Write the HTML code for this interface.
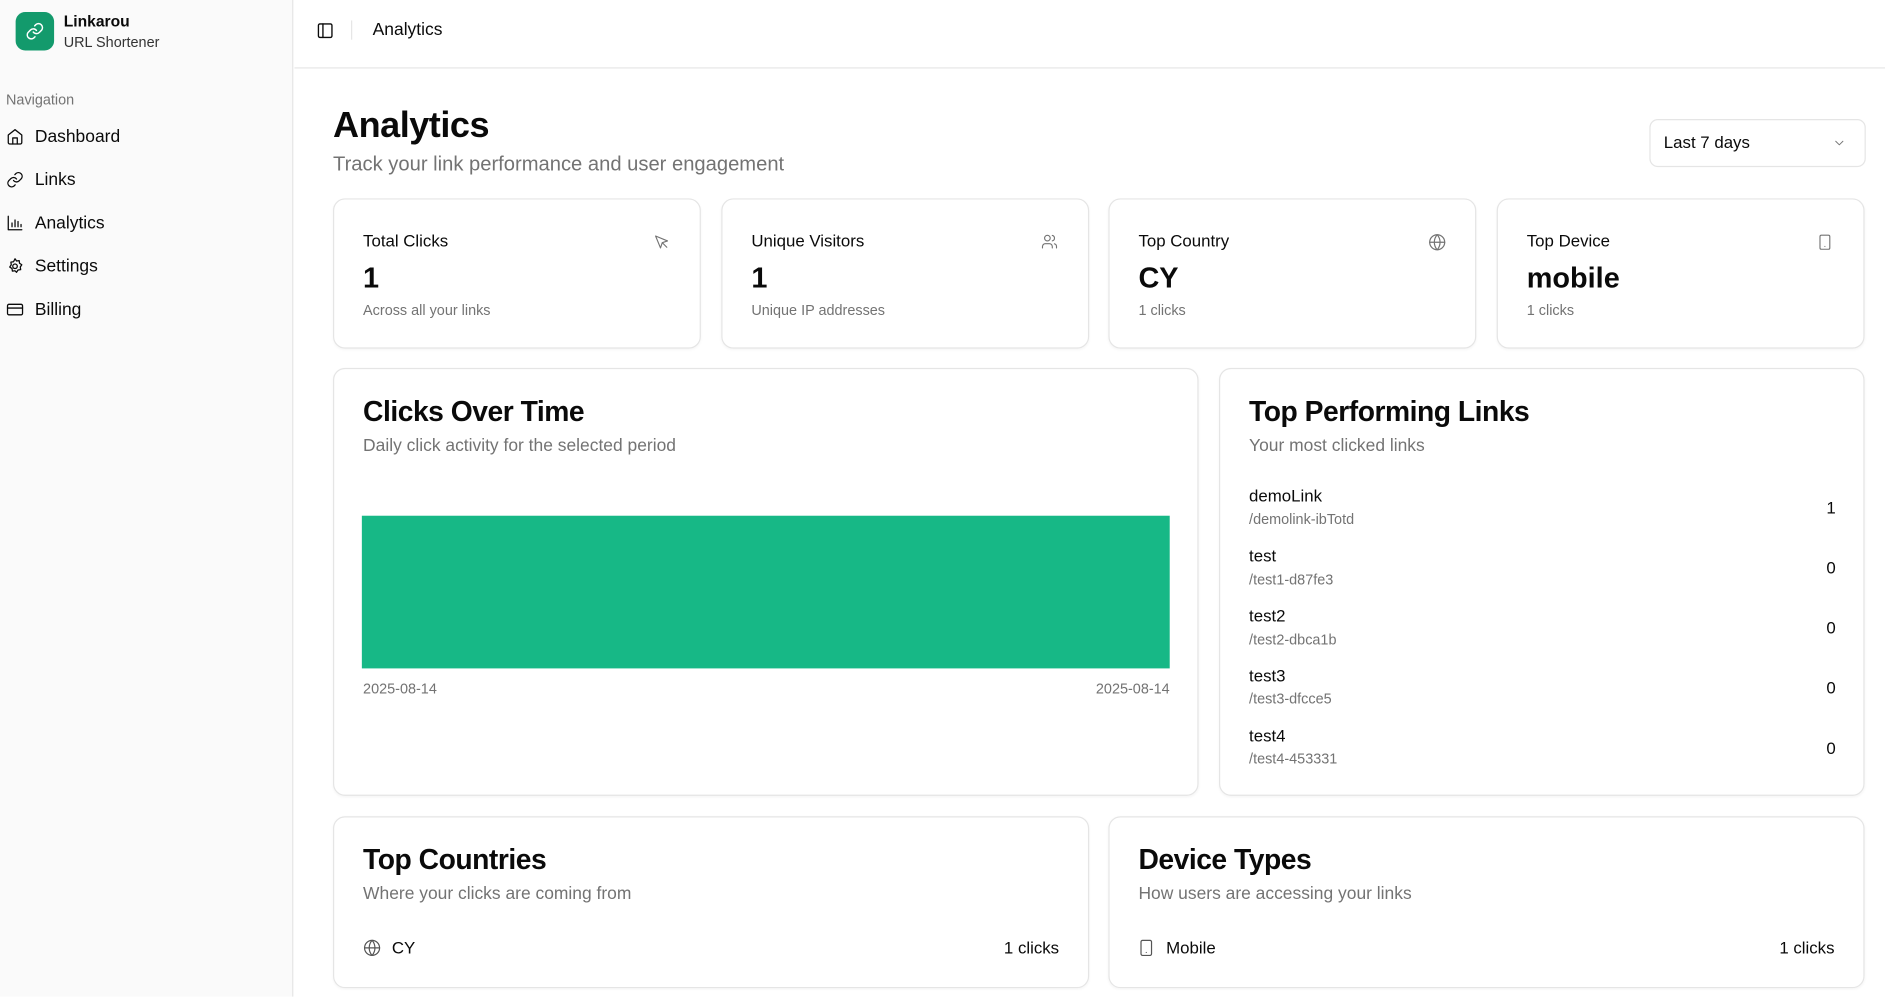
<!DOCTYPE html>
<html><head><meta charset="utf-8"><style>
*{box-sizing:border-box;margin:0;padding:0}
html,body{width:1885px;height:997px;overflow:hidden;background:#fff}
#s{position:absolute;left:0;top:0;width:1568px;height:829px;transform:scale(1.20217);transform-origin:0 0;font-family:"Liberation Sans",sans-serif;color:#0a0a0a}
.a{position:absolute;white-space:nowrap}
.card{position:absolute;border:1px solid #e5e5e5;border-radius:10px;background:#fff;box-shadow:0 1px 2px rgba(0,0,0,.04)}
.g{color:#737373}
svg{position:absolute;fill:none;stroke:currentColor;stroke-width:2;stroke-linecap:round;stroke-linejoin:round}
.st{font-size:14px;top:26px;left:24px}
.sv{font-size:24px;font-weight:bold;top:52px;left:24px}
.ss{font-size:12px;top:85px;left:24px}
.ct{font-size:23.5px;font-weight:bold;top:22px;left:24px;letter-spacing:-.4px}
.cd{font-size:14.5px;top:56px;left:24px}
.nm{font-size:14px}
.pt{font-size:12px}
</style></head><body><div id="s">
<div class="a" style="left:0;top:0;width:244px;height:829px;background:#fafafa;border-right:1px solid #e5e5e5"></div>
<div class="a" style="left:13px;top:10px;width:32px;height:32px;border-radius:8px;background:#139a6c"></div>
<svg style="left:21px;top:18px;color:#fff;stroke-width:1.8" width="16" height="16" viewBox="0 0 24 24"><path d="M10 13a5 5 0 0 0 7.5.5l3-3a5 5 0 0 0-7-7l-1.7 1.7"/><path d="M14 11a5 5 0 0 0-7.5-.5l-3 3a5 5 0 0 0 7 7l1.7-1.7"/></svg>
<div class="a" style="left:53px;top:10px;font-size:13px;font-weight:bold">Linkarou</div>
<div class="a" style="left:53px;top:28px;font-size:12px;color:#333">URL Shortener</div>
<div class="a g" style="left:5px;top:76px;font-size:12px">Navigation</div>
<svg style="left:5px;top:106px;stroke-width:1.7" width="15" height="15" viewBox="0 0 24 24"><path d="M3 10l9-7 9 7v10a2 2 0 0 1-2 2H5a2 2 0 0 1-2-2z"/><path d="M9 22v-8h6v8"/></svg>
<div class="a" style="left:29px;top:106px;font-size:14.5px">Dashboard</div>
<svg style="left:5px;top:142px;stroke-width:1.7" width="15" height="15" viewBox="0 0 24 24"><path d="M10 13a5 5 0 0 0 7.5.5l3-3a5 5 0 0 0-7-7l-1.7 1.7"/><path d="M14 11a5 5 0 0 0-7.5-.5l-3 3a5 5 0 0 0 7 7l1.7-1.7"/></svg>
<div class="a" style="left:29px;top:142px;font-size:14.5px">Links</div>
<svg style="left:5px;top:178px;stroke-width:1.7" width="15" height="15" viewBox="0 0 24 24"><path d="M3 3v18h18M8 17v-5M12 17V8M16 17v-7M20 17v-3"/></svg>
<div class="a" style="left:29px;top:178px;font-size:14.5px">Analytics</div>
<svg style="left:5px;top:214px;stroke-width:1.7" width="15" height="15" viewBox="0 0 24 24"><circle cx="12" cy="12" r="3"/><path d="M12 2l2 3 3.5-.5.5 3.5 3 2-2 3 .5 3.5-3.5.5-2 3-2-2-3.5.5-.5-3.5-3-2 2-3-.5-3.5 3.5-.5z"/></svg>
<div class="a" style="left:29px;top:214px;font-size:14.5px">Settings</div>
<svg style="left:5px;top:250px;stroke-width:1.7" width="15" height="15" viewBox="0 0 24 24"><rect x="2" y="5" width="20" height="14" rx="2"/><path d="M2 10h20"/></svg>
<div class="a" style="left:29px;top:250px;font-size:14.5px">Billing</div>
<div class="a" style="left:245px;top:56px;width:1323px;height:1px;background:#e5e5e5"></div>
<svg style="left:263px;top:18px;stroke-width:1.8" width="15" height="15" viewBox="0 0 24 24"><rect x="3" y="3" width="18" height="18" rx="2"/><path d="M9 3v18"/></svg>
<div class="a" style="left:292px;top:17px;width:1px;height:16px;background:#e5e5e5"></div>
<div class="a" style="left:310px;top:17px;font-size:14.5px">Analytics</div>
<div class="a" style="left:277px;top:88px;font-size:30px;font-weight:bold;letter-spacing:-.4px">Analytics</div>
<div class="a g" style="left:277px;top:127px;font-size:16.8px">Track your link performance and user engagement</div>
<div class="a" style="left:1372px;top:99px;width:180px;height:40px;border:1px solid #e5e5e5;border-radius:7px"></div>
<div class="a" style="left:1384px;top:110px;font-size:14px">Last 7 days</div>
<svg style="left:1524px;top:113px;color:#737373;stroke-width:1.5" width="12" height="12" viewBox="0 0 24 24"><path d="M6 9l6 6 6-6"/></svg>

<div class="card" style="left:277px;top:165px;width:306px;height:125px"><div class="a st">Total Clicks</div><div class="a sv">1</div><div class="a ss g">Across all your links</div>
<svg style="left:265px;top:28px;color:#737373;stroke-width:1.6" width="14" height="14" viewBox="0 0 24 24"><path d="M4 4l7 17 2.5-7.5L21 11z"/><path d="M14 14l6 6"/></svg></div>
<div class="card" style="left:600px;top:165px;width:306px;height:125px"><div class="a st">Unique Visitors</div><div class="a sv">1</div><div class="a ss g">Unique IP addresses</div>
<svg style="left:265px;top:28px;color:#737373;stroke-width:1.6" width="14" height="14" viewBox="0 0 24 24"><circle cx="9" cy="7" r="4"/><path d="M2 21v-2a4 4 0 0 1 4-4h6a4 4 0 0 1 4 4v2M16 3.1a4 4 0 0 1 0 7.8M22 21v-2a4 4 0 0 0-3-3.9"/></svg></div>
<div class="card" style="left:922px;top:165px;width:306px;height:125px"><div class="a st">Top Country</div><div class="a sv">CY</div><div class="a ss g">1 clicks</div>
<svg style="left:265px;top:28px;color:#737373;stroke-width:1.6" width="15" height="15" viewBox="0 0 24 24"><circle cx="12" cy="12" r="10"/><path d="M2 12h20M12 2a15 15 0 0 1 0 20M12 2a15 15 0 0 0 0 20"/></svg></div>
<div class="card" style="left:1245px;top:165px;width:306px;height:125px"><div class="a st">Top Device</div><div class="a sv">mobile</div><div class="a ss g">1 clicks</div>
<svg style="left:265px;top:28px;color:#737373;stroke-width:1.6" width="14" height="15" viewBox="0 0 24 24"><rect x="5" y="2" width="14" height="20" rx="2"/><path d="M12 18h.01"/></svg></div>

<div class="card" style="left:277px;top:306px;width:720px;height:356px"><div class="a ct">Clicks Over Time</div><div class="a cd g">Daily click activity for the selected period</div>
<div class="a" style="left:23px;top:122px;width:672px;height:127px;background:#17b886"></div>
<div class="a g" style="left:24px;top:259px;font-size:12px">2025-08-14</div>
<div class="a g" style="right:23px;top:259px;font-size:12px">2025-08-14</div></div>

<div class="card" style="left:1014px;top:306px;width:537px;height:356px"><div class="a ct">Top Performing Links</div><div class="a cd g">Your most clicked links</div>
<div class="a nm" style="left:24px;top:97px">demoLink</div><div class="a pt g" style="left:24px;top:118px">/demolink-ibTotd</div><div class="a nm" style="right:23px;top:107px">1</div>
<div class="a nm" style="left:24px;top:147px">test</div><div class="a pt g" style="left:24px;top:168px">/test1-d87fe3</div><div class="a nm" style="right:23px;top:157px">0</div>
<div class="a nm" style="left:24px;top:197px">test2</div><div class="a pt g" style="left:24px;top:218px">/test2-dbca1b</div><div class="a nm" style="right:23px;top:207px">0</div>
<div class="a nm" style="left:24px;top:247px">test3</div><div class="a pt g" style="left:24px;top:267px">/test3-dfcce5</div><div class="a nm" style="right:23px;top:257px">0</div>
<div class="a nm" style="left:24px;top:297px">test4</div><div class="a pt g" style="left:24px;top:317px">/test4-453331</div><div class="a nm" style="right:23px;top:307px">0</div></div>

<div class="card" style="left:277px;top:679px;width:629px;height:143px"><div class="a ct">Top Countries</div><div class="a cd g">Where your clicks are coming from</div>
<svg style="left:24px;top:101px;color:#555;stroke-width:1.6" width="15" height="15" viewBox="0 0 24 24"><circle cx="12" cy="12" r="10"/><path d="M2 12h20M12 2a15 15 0 0 1 0 20M12 2a15 15 0 0 0 0 20"/></svg>
<div class="a" style="left:48px;top:100px;font-size:14px">CY</div><div class="a" style="right:24px;top:100px;font-size:14px">1 clicks</div></div>
<div class="card" style="left:922px;top:679px;width:629px;height:143px"><div class="a ct">Device Types</div><div class="a cd g">How users are accessing your links</div>
<svg style="left:23px;top:101px;color:#555;stroke-width:1.6" width="15" height="15" viewBox="0 0 24 24"><rect x="5" y="2" width="14" height="20" rx="2"/><path d="M12 18h.01"/></svg>
<div class="a" style="left:47px;top:100px;font-size:14px">Mobile</div><div class="a" style="right:24px;top:100px;font-size:14px">1 clicks</div></div>
</div></body></html>
